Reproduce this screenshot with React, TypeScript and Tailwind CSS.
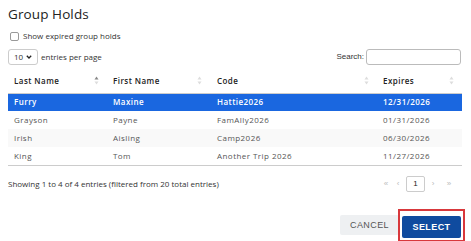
import { useState } from "react"

const rows = [
  { last: "Furry", first: "Maxine", code: "Hattie2026", expires: "12/31/2026" },
  { last: "Grayson", first: "Payne", code: "FamAlly2026", expires: "01/31/2026" },
  { last: "Irish", first: "Aisling", code: "Camp2026", expires: "06/30/2026" },
  { last: "King", first: "Tom", code: "Another Trip 2026", expires: "11/27/2026" },
]

const SortIcon = ({ active }: { active?: boolean }) => (
  <svg width="5" height="9" viewBox="0 0 5 9" className="shrink-0">
    <path d="M2.5 0.5 L4.5 3.5 H0.5 Z" fill={active ? "#888" : "#ddd"} />
    <path d="M2.5 8.5 L4.5 5.5 H0.5 Z" fill="#ddd" />
  </svg>
)

export default function App() {
  const [selected, setSelected] = useState(0)

  return (
    <div className="w-[471px] h-[241px] bg-white text-[#333] overflow-hidden px-2 pt-[5px] font-['Open_Sans',sans-serif]">
      <h1 className="text-[13.5px] leading-[18px] font-normal text-[#222] tracking-[0.1px]">Group Holds</h1>

      <label className="mt-[7px] flex items-center gap-[4px] text-[8px] leading-[12px] pl-[2px]">
        <span className="w-[9px] h-[9px] border border-[#999] rounded-[2px] bg-white" />
        Show expired group holds
      </label>

      <div className="mt-[7px] flex items-center justify-between">
        <div className="flex items-center gap-[3px] text-[8px]">
          <div className="w-[30px] h-[16px] border border-[#ccc] rounded-[3px] flex items-center justify-between px-[5px]">
            <span>10</span>
            <svg width="6" height="4" viewBox="0 0 6 4">
              <path d="M0.8 0.8 L3 3 L5.2 0.8" stroke="#222" strokeWidth="1.3" fill="none" />
            </svg>
          </div>
          entries per page
        </div>
        <div className="flex items-center gap-[2px] text-[8px] font-['Liberation_Sans',sans-serif] mr-[2px]">
          Search:
          <div className="w-[95px] h-[16px] border border-[#bbb] rounded-[3px]" />
        </div>
      </div>

      <table className="mt-[4px] w-[454px] border-collapse text-[8px] tracking-[0.45px]">
        <thead>
          <tr className="h-[24px] border-b border-[#ccc] font-semibold text-[#222]">
            <th className="w-[101px] text-left font-semibold pl-[6px]">
              <div className="flex items-center justify-between pr-[10px]">Last Name<SortIcon active /></div>
            </th>
            <th className="w-[104px] text-left font-semibold pl-[4px]">
              <div className="flex items-center justify-between pr-[11px]">First Name<SortIcon /></div>
            </th>
            <th className="w-[166px] text-left font-semibold pl-[4px]">
              <div className="flex items-center justify-between pr-[10px]">Code<SortIcon /></div>
            </th>
            <th className="text-left font-semibold pl-[4px]">
              <div className="flex items-center justify-between pr-[8px]">Expires<SortIcon /></div>
            </th>
          </tr>
        </thead>
        <tbody className="border-b border-[#ccc]">
          {rows.map((r, i) => (
            <tr
              key={r.last}
              onClick={() => setSelected(i)}
              className={
                "h-[18px] " +
                (i === selected
                  ? "bg-[#1a67e0] text-white font-semibold"
                  : i % 2 === 0
                  ? "bg-[#f9f9f9] text-[#555]"
                  : "bg-white text-[#555]")
              }
            >
              <td className="pl-[6px]">{r.last}</td>
              <td className="pl-[4px]">{r.first}</td>
              <td className="pl-[4px]">{r.code}</td>
              <td className="pl-[4px]">{r.expires}</td>
            </tr>
          ))}
        </tbody>
      </table>

      <div className="mt-[10px] flex items-center justify-between pr-[4px]">
        <div className="text-[8px] text-[#333]">Showing 1 to 4 of 4 entries (filtered from 20 total entries)</div>
        <div className="flex items-center text-[8px] text-[#bbb] font-['Liberation_Sans',sans-serif]">
          <span className="w-[12px] text-center">«</span>
          <span className="w-[12px] text-center">‹</span>
          <span className="w-[19px] h-[16px] border border-[#ccc] rounded-[2px] bg-white text-[#222] flex items-center justify-center mx-[2px]">1</span>
          <span className="w-[12px] text-center">›</span>
          <span className="w-[20px] text-center">»</span>
        </div>
      </div>

      <div className="mt-[17px] flex justify-end items-center font-['Liberation_Sans',sans-serif] -mr-[2px]">
        <button className="w-[59px] h-[20px] bg-[#eef0f2] rounded-[2px] text-[9px] text-[#555] tracking-[0.4px]">CANCEL</button>
        <div className="border-2 border-[#d8383c] p-[2px] -ml-[1px]">
          <button className="w-[59px] h-[22px] bg-[#0f4b9f] rounded-[2px] text-[9px] font-bold text-white tracking-[0.4px]">SELECT</button>
        </div>
      </div>
    </div>
  )
}
